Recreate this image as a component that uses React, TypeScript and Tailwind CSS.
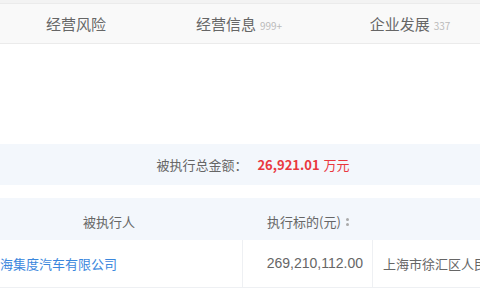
export default function App() {
  const font = "font-['Noto_Sans_CJK_SC','Noto_Sans',sans-serif]";

  return (
    <div className={`w-[480px] h-[300px] overflow-hidden bg-white ${font}`}>
      {/* tab bar */}
      <div className="h-[3px] bg-[#f3f3f3]" />
      <div className="grid h-[41px] grid-cols-3 items-center border-y border-[#ebebeb] bg-[#f9f9f9] pt-[2px] text-[15px] text-[#666]">
        <div className="flex items-baseline justify-center pr-[8px]">经营风险</div>
        <div className="flex items-baseline justify-center pr-[2px]">
          经营信息
          <span className="ml-[4px] text-[10px] text-[#bbb]">999+</span>
        </div>
        <div className="flex items-baseline justify-center pl-[20px]">
          企业发展
          <span className="ml-[4px] text-[10px] text-[#bbb]">337</span>
        </div>
      </div>

      <div className="h-[100px]" />

      {/* summary */}
      <div className="flex h-[41px] items-center justify-center bg-[#f3f7fc] pl-[26px] text-[13px] text-[#666]">
        <span>被执行总金额：</span>
        <span className="ml-[10px] font-bold text-[#e9383f]">26,921.01</span>
        <span className="ml-[4px] text-[#e9383f]">万元</span>
      </div>

      <div className="h-[13px]" />

      {/* table */}
      <div className="ml-[-25px] grid grid-cols-[268px_130px_1fr] text-[13px] text-[#666]">
        <div className="flex h-[42px] items-center justify-center bg-[#f3f7fc] pt-[6px]">被执行人</div>
        <div className="flex h-[42px] items-center justify-center bg-[#f3f7fc] pt-[6px]">
          执行标的(元)
          <span className="ml-[5px] flex flex-col gap-[2px]">
            <span className="block h-[3px] w-[3px] rounded-full bg-[#aaa]" />
            <span className="block h-[3px] w-[3px] rounded-full bg-[#aaa]" />
          </span>
        </div>
        <div className="h-[42px] bg-[#f3f7fc]" />

        <div className="flex h-[48px] items-center whitespace-nowrap border-b border-r border-[#eef0f3] pl-[12px] text-[#3b87dd]">
          上海集度汽车有限公司
        </div>
        <div className="flex h-[48px] items-center justify-end border-b border-r border-[#eef0f3] pr-[9px] font-['Liberation_Sans',sans-serif] text-[14px] text-[#666]">
          269,210,112.00
        </div>
        <div className="flex h-[48px] items-center whitespace-nowrap border-b border-[#eef0f3] pl-[10px]">
          上海市徐汇区人民法院
        </div>
      </div>
    </div>
  );
}
